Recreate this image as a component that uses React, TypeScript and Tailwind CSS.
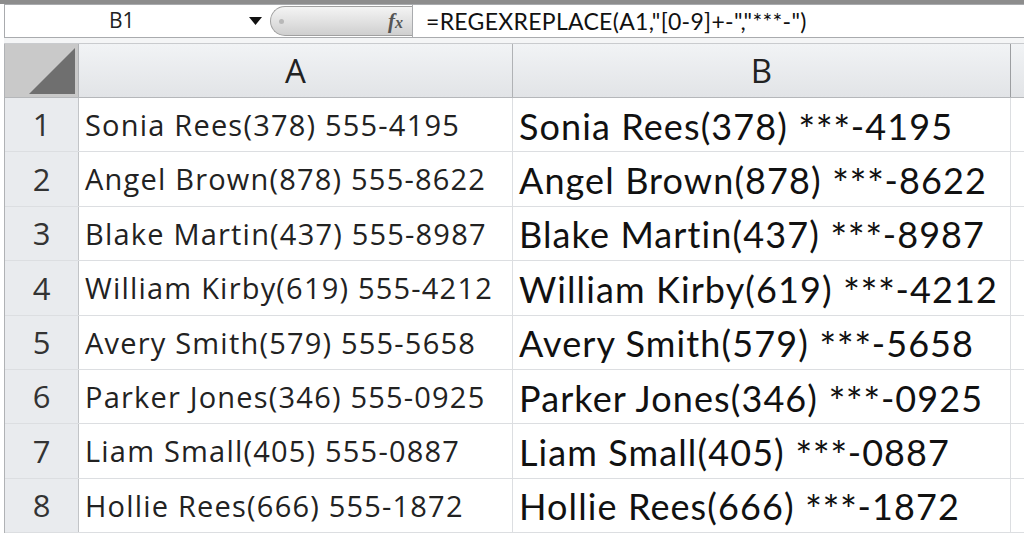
const ROWS = [
  ['Sonia Rees(378) 555-4195', 'Sonia Rees(378) ***-4195'],
  ['Angel Brown(878) 555-8622', 'Angel Brown(878) ***-8622'],
  ['Blake Martin(437) 555-8987', 'Blake Martin(437) ***-8987'],
  ['William Kirby(619) 555-4212', 'William Kirby(619) ***-4212'],
  ['Avery Smith(579) 555-5658', 'Avery Smith(579) ***-5658'],
  ['Parker Jones(346) 555-0925', 'Parker Jones(346) ***-0925'],
  ['Liam Small(405) 555-0887', 'Liam Small(405) ***-0887'],
  ['Hollie Rees(666) 555-1872', 'Hollie Rees(666) ***-1872'],
]

const uiFont = "font-['Open_Sans','Noto_Sans',sans-serif]"
const calFont = "font-['Lato','Liberation_Sans',sans-serif]"

// Calibri's asterisks are bigger than Lato's, so the stars get their own span
function Masked({ text }: { text: string }) {
  const [head, tail] = text.split('***')
  return (
    <>
      {head}
      <span className="relative top-[5px] text-[40px] tracking-[0.5px]">***</span>
      {tail}
    </>
  )
}

function FormulaBar() {
  return (
    <div className="flex h-[34px] border-t border-b border-l border-[#a9abae] bg-white">
      <div className="flex w-[265px] items-center">
        <span className={`ml-[104px] text-[21px] text-[#222] ${uiFont}`}>B1</span>
        <svg className="ml-auto mr-[8px]" width="13" height="8" viewBox="0 0 13 8">
          <path d="M0 0 H13 L6.5 8 Z" fill="#111" />
        </svg>
      </div>
      <div className="my-[1px] flex w-[142px] items-center justify-end rounded-l-full border border-r-0 border-[#a0a0a0] bg-gradient-to-b from-[#f4f4f4] via-[#e2e2e2] to-[#cfcfcf] pr-[9px]">
        <span className="mr-auto ml-[8px] h-[5px] w-[5px] rounded-full bg-[#b8b8b8]" />
        <span className="font-['Liberation_Serif',serif] text-[21px] leading-none font-bold italic text-[#555]">
          f<span className="text-[16px]">x</span>
        </span>
      </div>
      <div className="flex flex-1 items-center border-l border-[#a9abae] pl-[13px]">
        <span className={`text-[23px] tracking-[0.3px] text-[#111] ${calFont}`}>
          =REGEXREPLACE(A1,"[0-9]+-","***-")
        </span>
      </div>
    </div>
  )
}

function HeaderRow() {
  return (
    <div className="flex h-[54px] border-b border-[#b5b7ba]">
      <div className="relative w-[74px] border-r border-[#b0b2b5] bg-[#c9c9c9]">
        <svg className="absolute right-[3px] bottom-[3px]" width="46" height="46" viewBox="0 0 46 46">
          <path d="M46 0 V46 H0 Z" fill="#6f6f6f" />
        </svg>
      </div>
      <div className={`flex w-[434px] items-center justify-center border-r border-[#b0b2b5] bg-gradient-to-b from-[#f1f3f5] to-[#e2e4e7] text-[33px] text-[#222] ${uiFont}`}>
        A
      </div>
      <div className={`flex w-[498px] items-center justify-center border-r border-[#9c9ea1] bg-gradient-to-b from-[#f1f3f5] to-[#e2e4e7] text-[33px] text-[#222] ${uiFont}`}>
        B
      </div>
      <div className="flex-1 bg-gradient-to-b from-[#f1f3f5] to-[#e2e4e7]" />
    </div>
  )
}

export default function App() {
  return (
    <div className="h-[537px] w-[1024px] overflow-hidden bg-white">
      <div className="h-[4px] bg-[#8d8d8d]" />
      <div className="pl-[4px]">
        <FormulaBar />
        <div className="h-[6px] border-b border-[#c9cbce] bg-[#f4f5f6]" />
        <div className="border-l border-[#b0b2b5]">
          <HeaderRow />
          {ROWS.map(([a, b], i) => (
            <div key={i} className="flex h-[54.4px] border-b border-[#dcdee1]">
              <div className={`flex w-[74px] items-center justify-center border-r border-[#c2c4c7] bg-[#e9ebee] text-[31px] text-[#333] ${uiFont}`}>
                {i + 1}
              </div>
              <div className={`flex w-[434px] items-center whitespace-nowrap border-r border-[#dcdee1] pl-[6px] text-[29px] tracking-[1.2px] text-[#222] ${uiFont}`}>
                {a}
              </div>
              <div className={`flex w-[498px] items-center whitespace-nowrap border-r border-[#dcdee1] pl-[6px] text-[36px] leading-none tracking-[1.1px] text-[#111] ${calFont}`}>
                <span>
                  <Masked text={b} />
                </span>
              </div>
              <div className="flex-1" />
            </div>
          ))}
        </div>
      </div>
    </div>
  )
}
